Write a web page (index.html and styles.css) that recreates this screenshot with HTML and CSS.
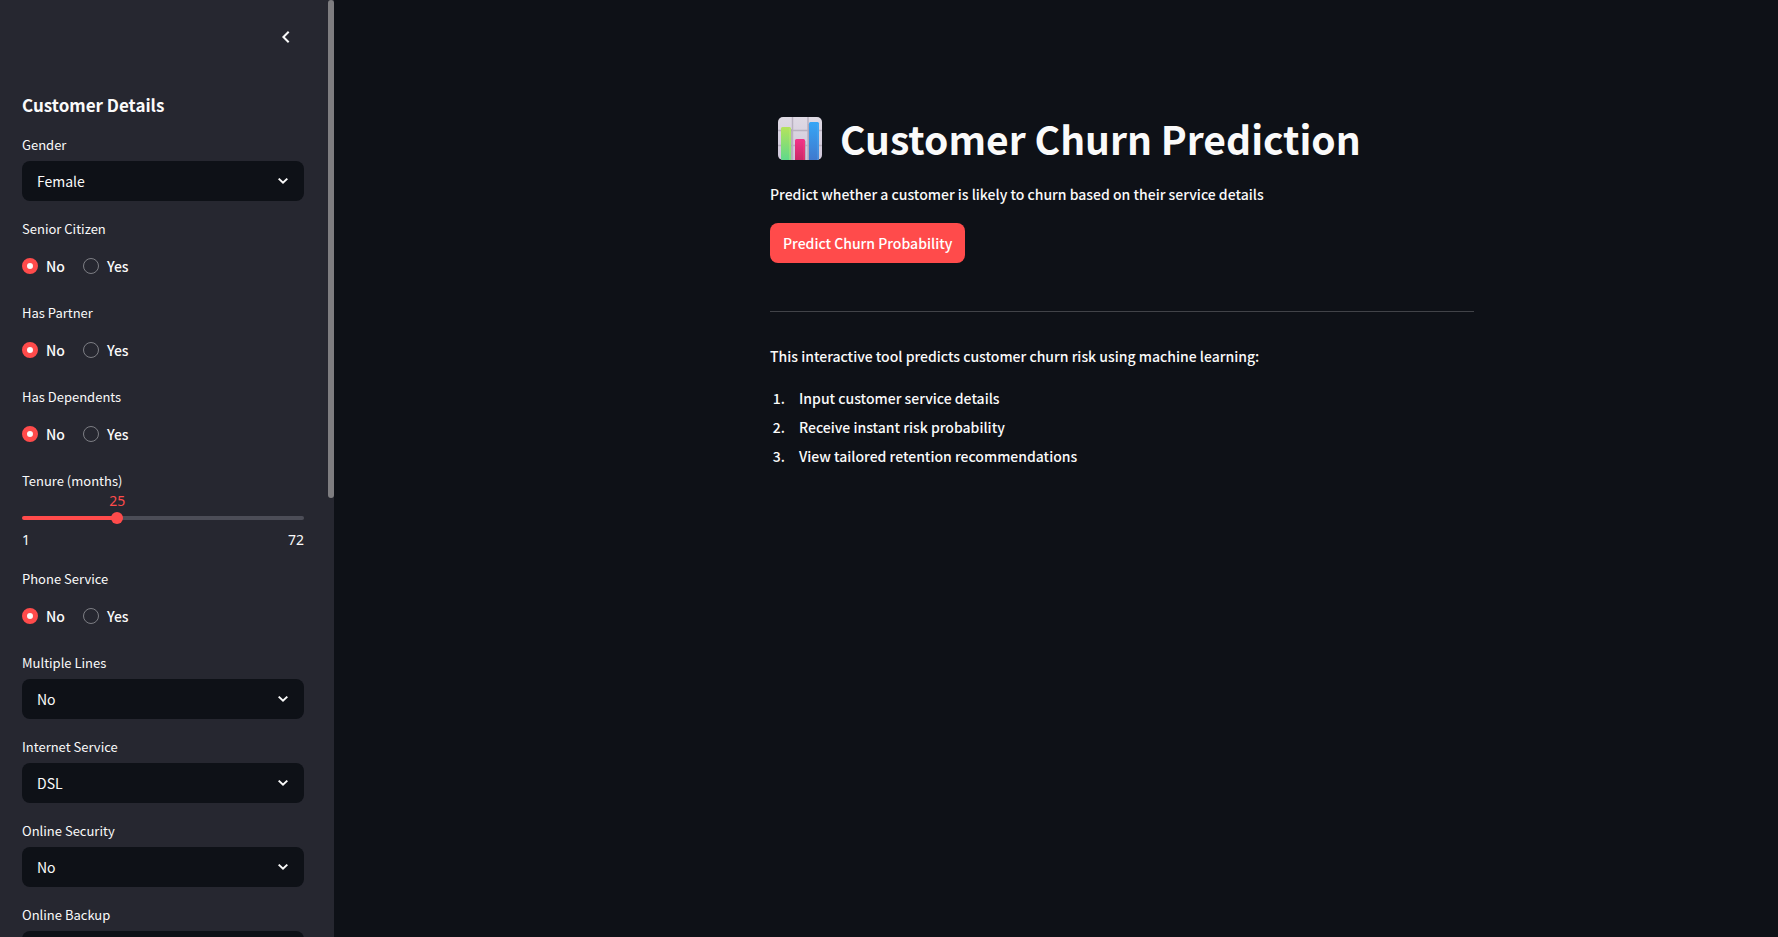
FILE: index.html
```html
<!DOCTYPE html>
<html lang="en">
<head>
<meta charset="utf-8">
<meta name="viewport" content="width=device-width, initial-scale=1">
<title>Customer Churn Prediction</title>
<link rel="stylesheet" href="styles.css">
</head>
<body>
<div class="app">
  <aside class="sidebar">
    <div class="sidebar-header">
      <button class="collapse" type="button" aria-label="Collapse sidebar">
        <svg width="24" height="24" viewBox="0 0 24 24" fill="none" stroke="currentColor" stroke-width="2"><path d="M14.7 6.7 9.4 12l5.3 5.3"/></svg>
      </button>
    </div>
    <form class="fields">
      <h2 class="sidebar-title">Customer Details</h2>
      <div class="field">
        <label class="label" for="gender">Gender</label>
        <div class="select-wrap">
          <select class="select" id="gender"><option>Female</option><option>Male</option></select>
          <svg class="chevron" viewBox="0 0 12 8"><path d="M1.7 1.6 6 5.7l4.3-4.1"/></svg>
        </div>
      </div>
      <fieldset class="field">
        <legend class="label">Senior Citizen</legend>
        <div class="radios">
          <label class="option"><input class="radio" type="radio" name="senior" checked>No</label>
          <label class="option"><input class="radio" type="radio" name="senior">Yes</label>
        </div>
      </fieldset>
      <fieldset class="field">
        <legend class="label">Has Partner</legend>
        <div class="radios">
          <label class="option"><input class="radio" type="radio" name="partner" checked>No</label>
          <label class="option"><input class="radio" type="radio" name="partner">Yes</label>
        </div>
      </fieldset>
      <fieldset class="field">
        <legend class="label">Has Dependents</legend>
        <div class="radios">
          <label class="option"><input class="radio" type="radio" name="dependents" checked>No</label>
          <label class="option"><input class="radio" type="radio" name="dependents">Yes</label>
        </div>
      </fieldset>
      <div class="field">
        <label class="label label-slider" for="tenure">Tenure (months)</label>
        <div class="slider" style="--value: 33.8%">
          <output class="slider-value" for="tenure">25</output>
          <div class="slider-track">
            <input class="range" id="tenure" type="range" min="1" max="72" value="25">
          </div>
          <div class="slider-ends"><span>1</span><span>72</span></div>
        </div>
      </div>
      <fieldset class="field">
        <legend class="label">Phone Service</legend>
        <div class="radios">
          <label class="option"><input class="radio" type="radio" name="phone" checked>No</label>
          <label class="option"><input class="radio" type="radio" name="phone">Yes</label>
        </div>
      </fieldset>
      <div class="field">
        <label class="label" for="lines">Multiple Lines</label>
        <div class="select-wrap">
          <select class="select" id="lines"><option>No</option><option>Yes</option></select>
          <svg class="chevron" viewBox="0 0 12 8"><path d="M1.7 1.6 6 5.7l4.3-4.1"/></svg>
        </div>
      </div>
      <div class="field">
        <label class="label" for="internet">Internet Service</label>
        <div class="select-wrap">
          <select class="select" id="internet"><option>DSL</option><option>Fiber optic</option><option>No</option></select>
          <svg class="chevron" viewBox="0 0 12 8"><path d="M1.7 1.6 6 5.7l4.3-4.1"/></svg>
        </div>
      </div>
      <div class="field">
        <label class="label" for="security">Online Security</label>
        <div class="select-wrap">
          <select class="select" id="security"><option>No</option><option>Yes</option></select>
          <svg class="chevron" viewBox="0 0 12 8"><path d="M1.7 1.6 6 5.7l4.3-4.1"/></svg>
        </div>
      </div>
      <div class="field">
        <label class="label" for="backup">Online Backup</label>
        <div class="select-wrap">
          <select class="select" id="backup"><option>No</option><option>Yes</option></select>
          <svg class="chevron" viewBox="0 0 12 8"><path d="M1.7 1.6 6 5.7l4.3-4.1"/></svg>
        </div>
      </div>
    </form>
    <div class="scroll-thumb"></div>
  </aside>
  <main class="main">
    <div class="content">
      <h1 class="title">
        <svg class="chart" viewBox="0 0 44 43" role="img" aria-label="Bar chart">
          <defs>
            <linearGradient id="bg" x1="0" y1="0" x2="0" y2="1"><stop offset="0" stop-color="#dfdae4"/><stop offset="1" stop-color="#cfc7da"/></linearGradient>
            <linearGradient id="green" x1="0" y1="0" x2="0" y2="1"><stop offset="0" stop-color="#b5e35c"/><stop offset="1" stop-color="#60d98b"/></linearGradient>
            <linearGradient id="pink" x1="0" y1="0" x2="0" y2="1"><stop offset="0" stop-color="#f23489"/><stop offset="1" stop-color="#cb2867"/></linearGradient>
            <linearGradient id="blue" x1="0" y1="0" x2="0" y2="1"><stop offset="0" stop-color="#36a6f6"/><stop offset="1" stop-color="#4079ce"/></linearGradient>
            <clipPath id="tile"><rect width="44" height="43" rx="5"/></clipPath>
          </defs>
          <g clip-path="url(#tile)">
            <rect width="44" height="43" fill="url(#bg)"/>
            <path d="M14.5 0v43M30 0v43M0 13.5h44M0 28.500h44" stroke="#b9b1c0" stroke-width="1.500"/>
            <path d="M13 12h1v31h-1zM27 24h1v19h-1zM30 7h1v36h-1z" fill="#a79fb0" opacity=".6"/>
            <path d="M3 43V11.500Q3 10 4.500 10h7Q13 10 13 11.500V43z" fill="url(#green)"/>
            <path d="M17 43V23.500Q17 22 18.500 22h7Q27 22 27 23.500V43z" fill="url(#pink)"/>
            <path d="M31 43V6.500Q31 5 32.500 5h7Q41 5 41 6.500V43z" fill="url(#blue)"/>
            <path d="M12 11.500V43" stroke="#c8f074" opacity=".6"/>
            <path d="M26 24v19" stroke="#ff4d83" opacity=".5"/>
            <path d="M40 7v36" stroke="#5ab5f5" opacity=".5"/>
          </g>
        </svg>
        <span>Customer Churn Prediction</span>
      </h1>
      <p class="text">Predict whether a customer is likely to churn based on their service details</p>
      <button class="primary" type="button">Predict Churn Probability</button>
      <hr class="divider">
      <p class="text">This interactive tool predicts customer churn risk using machine learning:</p>
      <ol class="steps">
        <li>Input customer service details</li>
        <li>Receive instant risk probability</li>
        <li>View tailored retention recommendations</li>
      </ol>
    </div>
  </main>
</div>
</body>
</html>
```
FILE: styles.css
```css
* { box-sizing: border-box; }

body {
  margin: 0;
  background: #0e1117;
  color: #fafafa;
  font-family: "Noto Sans CJK SC", "Open Sans", sans-serif;
  font-size: 14px;
  font-weight: 500;
  line-height: 24px;
}

.app { display: flex; height: 100vh; }

.sidebar {
  position: relative;
  flex: none;
  width: 334px;
  padding: 0 30px 0 22px;
  background: #262730;
  overflow: hidden;
}

.sidebar-header {
  display: flex;
  justify-content: flex-end;
  padding: 25px 6px 44px 0;
}

.collapse {
  display: flex;
  padding: 0;
  border: 0;
  background: none;
  color: #fafafa;
}

.fields { display: flex; flex-direction: column; gap: 16px; }

.sidebar-title { margin: 0; font-size: 17px; line-height: 24px; font-weight: 600; }

.field { margin: 0; padding: 0; border: 0; min-width: 0; }

.label {
  display: block;
  margin-bottom: 4px;
  padding: 0;
  font-size: 13px;
  font-weight: 400;
  line-height: 24px;
}

.label-slider { margin-bottom: 0; }

.select-wrap { position: relative; }

.select {
  display: block;
  width: 100%;
  height: 40px;
  padding: 0 40px 0 15px;
  appearance: none;
  border: 0;
  border-radius: 8px;
  background: #0e1117;
  color: inherit;
  font: inherit;
  font-weight: 400;
}

.chevron {
  position: absolute;
  right: 15px;
  top: 16px;
  width: 12px;
  height: 8px;
  fill: none;
  stroke: #fafafa;
  stroke-width: 2;
  pointer-events: none;
}

.radios { display: flex; gap: 18px; height: 40px; padding-top: 2px; align-items: center; }

.option { display: flex; align-items: center; gap: 8px; }

.radio {
  width: 16px;
  height: 16px;
  margin: 0;
  appearance: none;
  border: 1px solid #7d7e84;
  border-radius: 50%;
}

.radio:checked { border: 5px solid #ff4b4b; background: #fafafa; }

.slider {
  display: flex;
  flex-direction: column;
  font-family: "Noto Sans", sans-serif;
  font-weight: 400;
}

.slider-value {
  align-self: flex-start;
  margin-left: var(--value);
  transform: translateX(-50%);
  color: #ff4b4b;
  line-height: 16px;
}

.slider-track {
  display: flex;
  height: 4px;
  margin: 7px 0 8px;
  border-radius: 4px;
  background: linear-gradient(to right, #ff4b4b var(--value), #4c4d57 var(--value));
}

.range {
  flex: 1;
  height: 12px;
  margin: -4px -6px;
  appearance: none;
  background: none;
}

.range::-webkit-slider-thumb {
  width: 12px;
  height: 12px;
  appearance: none;
  border-radius: 50%;
  background: #ff4b4b;
}

.slider-ends { display: flex; justify-content: space-between; line-height: 23px; }

.scroll-thumb {
  position: absolute;
  top: 0;
  right: 0;
  width: 6px;
  height: 53.1%;
  border-radius: 3px;
  background: #7e7d80;
}

.main { flex: 1; padding: 111px 0 0 132px; overflow: auto; }

.content { max-width: 704px; margin: 0 auto; }

.title {
  display: flex;
  align-items: center;
  gap: 18px;
  margin: 0 0 17px;
  padding-left: 8px;
  font-size: 39px;
  line-height: 54px;
  font-weight: 700;
}

.chart { width: 44px; height: 43px; flex: none; }

.text { margin: 0; }

.primary {
  display: block;
  height: 40px;
  margin-top: 17px;
  padding: 0 13px;
  border: 0;
  border-radius: 8px;
  background: #ff4b4b;
  color: #fff;
  font: inherit;
}

.divider { height: 1px; margin: 48px 0 32px; border: 0; background: #414348; }

.steps { margin: 16px 0 0; padding-left: 18px; line-height: 29px; }

.steps li { padding-left: 11px; }
```
